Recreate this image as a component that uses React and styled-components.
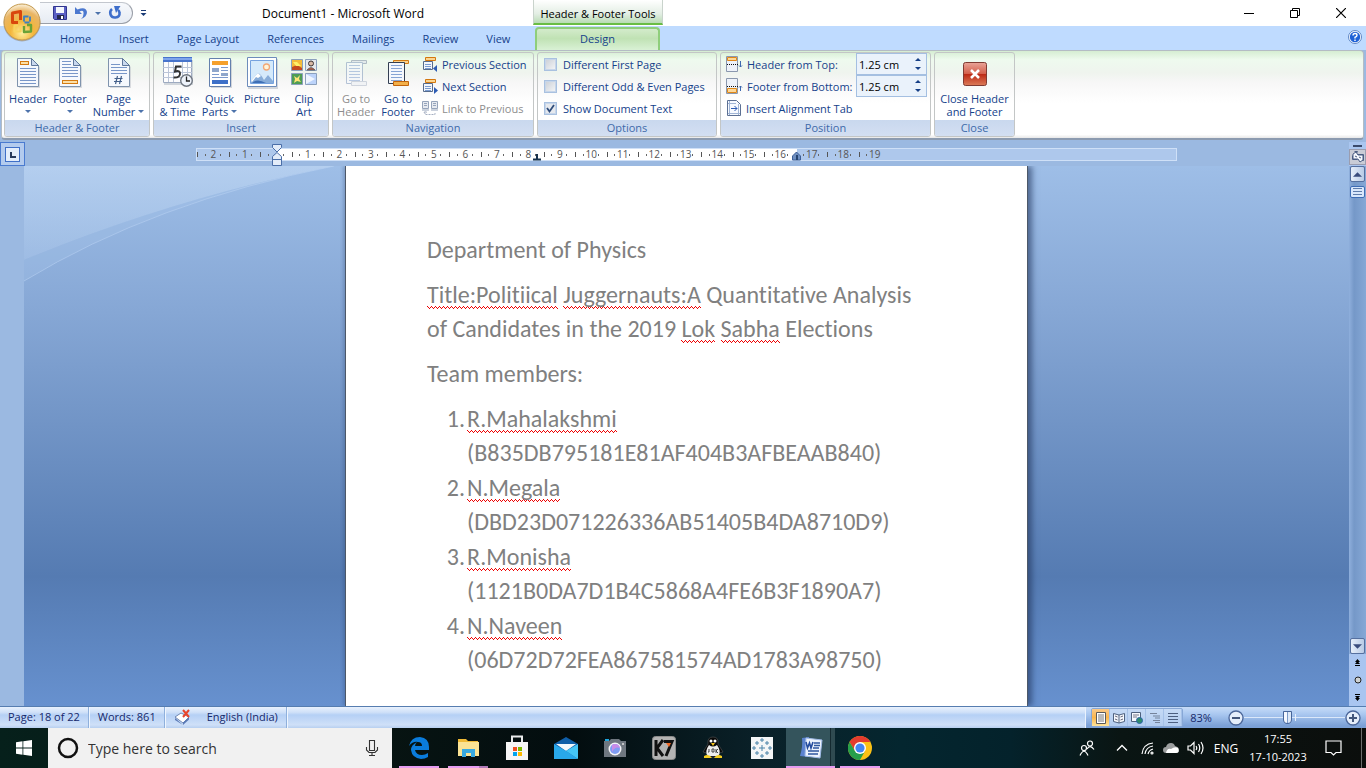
import React from "react";
import styled, { createGlobalStyle, css } from "styled-components";

const Global = createGlobalStyle`
  * { box-sizing: border-box; }
  body { margin: 0; background: #9bb9e1; font-family: "Open Sans", "Noto Sans", sans-serif; font-size: 11px; color: #15428b; }
  button, input { font: inherit; color: inherit; margin: 0; }
  button { padding: 0; border: 0; background: none; cursor: pointer; }
  svg { display: block; flex: none; }
`;

const Shell = styled.div`
  display: flex;
  flex-direction: column;
  height: 100vh;
  min-width: 1100px;
  position: relative;
  overflow: hidden;
`;

/* ---------- title bar ---------- */
const TitleBar = styled.header`
  display: flex;
  height: 26px;
  flex: none;
  background: #fff;
  color: #000;
`;
const OfficeButton = styled.button`
  position: absolute;
  left: 2px;
  top: 2px;
  z-index: 3;
`;
const TitleLeft = styled.div`
  display: flex;
  align-items: center;
  width: 533px;
  flex: none;
  padding-left: 40px;
`;
const QuickAccess = styled.div`
  display: flex;
  align-items: center;
  gap: 7px;
  width: 93px;
  height: 22px;
  padding-left: 13px;
  border: 1px solid #9a9fa8;
  border-top-color: #c3c7ce;
  border-left: 0;
  border-radius: 0 11px 11px 0;
  background: linear-gradient(#f7f9fc, #e6ebf3);
`;
const MoreButton = styled.button`
  margin-left: 7px;
`;
const DocTitle = styled.h1`
  flex: 1;
  margin: 0 0 0 6px;
  text-align: center;
  font-size: 12px;
  font-weight: 400;
`;
const ToolsCaption = styled.div`
  display: flex;
  align-items: center;
  justify-content: center;
  width: 130px;
  height: 25px;
  padding-top: 3px;
  border: solid #c9d3cc;
  border-width: 0 1px;
  border-bottom: 2px solid #69bd45;
  background: linear-gradient(#fff, #e3eee4 60%, #b9dcb4);
  white-space: nowrap;
`;
const WindowButtons = styled.div`
  display: flex;
  margin: 0 2px 0 auto;
`;
const WindowButton = styled.button`
  display: grid;
  place-items: center;
  width: 46px;
  height: 25px;
`;

/* ---------- tabs ---------- */
const TabBar = styled.nav`
  display: flex;
  height: 24px;
  flex: none;
  background: #bfdbff;
`;
const TabList = styled.div`
  display: flex;
  width: 535px;
  flex: none;
  padding-left: 46px;
`;
const Tab = styled.button`
  padding: 0 14px 0 14px;
  white-space: nowrap;
  ${(p) =>
    p.$active &&
    css`
      width: 125px;
      height: 23px;
      margin-top: 1px;
      padding-bottom: 3px;
      border: 2px solid #8fce7b;
      border-bottom: 0;
      border-radius: 4px 4px 0 0;
      background: linear-gradient(#d3ebcb, #c0e2b4 45%, #d9f1d5);
    `}
`;
const HelpButton = styled.button`
  margin: 0 4px 2px auto;
`;

/* ---------- ribbon ---------- */
const Ribbon = styled.section`
  display: flex;
  gap: 3px;
  flex: none;
  height: 90px;
  margin: 0 2px 2px 1px;
  padding: 1px 2px;
  border: 1px solid #b4bcc4;
  border-bottom: 2px solid #8c9bb0;
  border-radius: 4px;
  background: linear-gradient(#d5edd2, #eefaee 10%, #eff4ee 25%, #f7f7f7 36%, #fff 60%, #fff 96%, #e8e8e8);
`;
const GroupBox = styled.div`
  display: flex;
  flex-direction: column;
  width: ${(p) => p.$width}px;
  flex: none;
  border: 1px solid #c3c6c6;
  border-radius: 3px;
  overflow: hidden;
`;
const GroupBody = styled.div`
  display: flex;
  flex: 1;
  padding: ${(p) => p.$pad || "0 2px"};
`;
const GroupCaption = styled.div`
  height: 16px;
  line-height: 16px;
  text-align: center;
  color: #3e6aaa;
  background: linear-gradient(#c9d8ee, #d3dff2);
`;
const BigButton = styled.button`
  display: flex;
  flex-direction: column;
  align-items: center;
  width: ${(p) => p.$width || 42}px;
  padding-top: 4px;
  line-height: 13px;
  white-space: nowrap;
  color: ${(p) => (p.disabled ? "#8d8d8d" : "#15428b")};
  svg.icon { margin-bottom: 3px; }
`;
const LabelLine = styled.span`
  display: flex;
  align-items: center;
  justify-content: center;
  gap: 3px;
  min-height: 13px;
`;
const Rows = styled.div`
  display: flex;
  flex-direction: column;
  padding-left: ${(p) => p.$indent || 0}px;
`;
const Row = styled.div`
  display: flex;
  align-items: center;
  gap: 4px;
  height: 22px;
  white-space: nowrap;
`;
const SmallButton = styled(Row).attrs({ as: "button" })`
  color: ${(p) => (p.disabled ? "#8d8d8d" : "#15428b")};
`;
const Check = styled.label`
  display: flex;
  align-items: center;
  gap: 6px;
  height: 22px;
  white-space: nowrap;
  input {
    appearance: none;
    width: 13px;
    height: 13px;
    border: 1px solid #a9c1e0;
    outline: 1px solid #c7d6ea;
    outline-offset: -2px;
    background: linear-gradient(135deg, #c9ced6, #f6f7f8);
  }
  input:checked {
    background: url("data:image/svg+xml,%3Csvg xmlns='http://www.w3.org/2000/svg' viewBox='0 0 11 11'%3E%3Cpath d='M2 5l2.500 3.500L9 2' fill='none' stroke='%232f4d7c' stroke-width='1.800'/%3E%3C/svg%3E") center / 11px 11px no-repeat, #e6e9ee;
  }
`;
const FieldLabel = styled.label`
  width: 105px;
`;
const Spin = styled.div`
  display: flex;
  width: 71px;
  height: 22px;
  border: 1px solid #a4bfe1;
  background: #eaf2fb;
  input {
    width: 50px;
    padding: 0 2px;
    border: 0;
    background: none;
    color: #000;
  }
`;
const SpinButtons = styled.div`
  display: flex;
  flex-direction: column;
  justify-content: center;
  gap: 6px;
  margin-left: 8px;
`;

/* ---------- ruler ---------- */
const RulerRow = styled.div`
  display: flex;
  height: 24px;
  flex: none;
  background: #9bb9e1;
`;
const TabStop = styled.button`
  display: grid;
  place-items: center;
  width: 25px;
  height: 24px;
  margin-right: -1px;
  border: 1px solid #4a7bd0;
  background: #b3cbee;
`;
const RulerTrack = styled.div`
  display: flex;
  flex: 1;
  justify-content: center;
  align-items: center;
`;
const RulerBar = styled.div`
  position: relative;
  width: 981px;
  height: 13px;
  border: 1px solid #cfe0f7;
  background: linear-gradient(90deg, #aec8ec 80px, #fff 80px 600px, #aec8ec 600px);
`;
const Scale = styled.div`
  display: grid;
  grid-template-columns: repeat(22, 1fr);
  width: 693px;
  height: 11px;
`;
const Unit = styled.span`
  padding-left: 1px;
  text-align: center;
  line-height: 10px;
  font-size: 10px;
  color: #555;
  background:
    linear-gradient(#555, #555) 0 3px / 1px 5px no-repeat,
    linear-gradient(#666, #666) 25% 5px / 1px 2px no-repeat,
    linear-gradient(#666, #666) 75% 5px / 1px 2px no-repeat;
  &:last-child {
    background:
      linear-gradient(#555, #555) 0 3px / 1px 5px no-repeat,
      linear-gradient(#666, #666) 25% 5px / 1px 2px no-repeat;
  }
`;
const Marker = styled.svg`
  position: absolute;
  left: ${(p) => p.$left}px;
  top: ${(p) => p.$top}px;
`;
const SideTop = styled.div`
  display: flex;
  flex-direction: column;
  align-items: center;
  gap: 2px;
  width: 17px;
  padding-top: 3px;
  background: #aac6f0;
`;
const SplitHandle = styled.span`
  width: 9px;
  height: 2px;
  background: #3a4a6c;
`;
const RulerToggle = styled.button`
  display: grid;
  place-items: center;
  width: 17px;
  height: 16px;
  border: 1px solid #9a9db0;
  background: #c9ccd6;
`;

/* ---------- workspace ---------- */
const Workspace = styled.main`
  display: flex;
  flex: 1;
  min-height: 0;
`;
const VerticalRuler = styled.div`
  width: 24px;
  flex: none;
  background: #9bb9e1;
`;
const Desk = styled.div`
  position: relative;
  display: flex;
  justify-content: center;
  flex: 1;
  overflow: hidden;
  background: linear-gradient(#9ebee7, #86a7d5 27%, #557bb2 76%, #6791cf);
`;
const Swoosh = styled.svg`
  position: absolute;
  left: 0;
  top: 0;
`;
const Page = styled.article`
  position: relative;
  width: 683px;
  padding: 67px 81px 0;
  border: solid #4d5868;
  border-width: 0 1px;
  background: #fff;
  box-shadow: 4px 0 6px rgba(30, 50, 90, 0.6), -2px 0 3px rgba(30, 50, 90, 0.2);
  color: #808080;
  font-family: Carlito, Lato, sans-serif;
  font-size: 24px;
  font-variant-ligatures: none;
  line-height: 34px;
`;
const Para = styled.p`
  margin: 0 0 11px;
  white-space: nowrap;
`;
const Members = styled.ol`
  display: flex;
  flex-direction: column;
  gap: 1px;
  margin: 0;
  padding: 0;
  list-style: none;
`;
const Member = styled.li`
  display: grid;
  grid-template-columns: 40px 1fr;
`;
const Num = styled.span`
  text-align: right;
  padding-right: 2px;
`;
const Typo = styled.span`
  background:
    repeating-linear-gradient(90deg, #e00 0 1px, transparent 1px 4px) 0 calc(100% - 2px) / 100% 1px no-repeat,
    repeating-linear-gradient(90deg, transparent 0 1px, #e00 1px 2px) 0 calc(100% - 1px) / 100% 1px no-repeat,
    repeating-linear-gradient(90deg, transparent 0 2px, #e00 2px 3px, transparent 3px 4px) 0 100% / 100% 1px no-repeat;
`;
const Scroll = styled.div`
  display: flex;
  flex-direction: column;
  align-items: center;
  width: 17px;
  background: linear-gradient(90deg, #8fafdc, #7598c8 30%, #86a8d6);
`;
const ScrollButton = styled.button`
  display: grid;
  place-items: center;
  width: 15px;
  height: 16px;
  border: 1px solid #56709f;
  border-radius: 2px;
  background: linear-gradient(90deg, #e6eef9, #b9cbe6);
`;
const ScrollThumb = styled.div`
  display: grid;
  place-items: center;
  width: 15px;
  height: 12px;
  margin: 4px 0 auto;
  border: 1px solid #3e6db5;
  border-radius: 2px;
  background: #d9e7fb;
`;
const BrowseButtons = styled.div`
  display: flex;
  flex-direction: column;
  align-items: center;
  justify-content: space-around;
  width: 17px;
  height: 52px;
  background: #a9c5f0;
`;

/* ---------- status bar ---------- */
const StatusBar = styled.footer`
  display: flex;
  height: 22px;
  flex: none;
  border-top: 1px solid #567db0;
  background: linear-gradient(#e8f1fd, #d0e1f8 25%, #b5d0f5 38%, #cfe0f8 85%, #b7cff0);
  color: #15286b;
`;
const StatusItem = styled.button`
  display: flex;
  align-items: center;
  gap: 16px;
  padding: 0 8px 2px 9px;
  border-right: 1px solid #8fb0dc;
  box-shadow: 1px 0 #eff6ff;
  white-space: nowrap;
  &:first-child { padding-left: 8px; }
`;
const StatusRight = styled.div`
  display: flex;
  align-items: center;
  margin-left: auto;
  width: 281px;
  padding: 0 5px;
  border-left: 1px solid #eaf2fd;
  background: linear-gradient(#c7dcf8, #a9c7f0 35%, #7ba0d6 90%);
`;
const ViewButtons = styled.div`
  display: flex;
  border: 1px solid #87a7d6;
  border-radius: 2px;
`;
const ViewButton = styled.button`
  display: grid;
  place-items: center;
  width: 18px;
  height: 17px;
  border-right: 1px solid #a5c1e8;
  background: ${(p) => (p.$active ? "linear-gradient(#f8c98b, #fbb64c 50%, #fde49b)" : "linear-gradient(#c5daf6, #b3ccef)")};
`;
const Percent = styled.button`
  width: 36px;
  margin-right: auto;
  text-align: center;
`;
const ZoomButton = styled.button`
  display: grid;
  place-items: center;
`;
const ZoomRange = styled.input`
  appearance: none;
  width: 101px;
  height: 15px;
  background:
    linear-gradient(#e6effb, #e6effb) 51% 50% / 1px 7px no-repeat,
    linear-gradient(#dbe8fa, #dbe8fa) 0 50% / 100% 1px no-repeat;
  &::-webkit-slider-thumb {
    appearance: none;
    width: 9px;
    height: 13px;
    border: 1px solid #46659a;
    border-radius: 1px 1px 5px 5px;
    background: linear-gradient(90deg, #f4f8ff 3px, #7d9bc9 3px 4px, #dce8f8 4px);
  }
`;

/* ---------- taskbar ---------- */
const Taskbar = styled.footer`
  display: flex;
  height: 40px;
  flex: none;
  background: linear-gradient(90deg, #06201b, #071412 28%, #030d0f 42%, #0a2129 56%, #04262f 66%, #04222b 74%, #0a1513 82%, #0b0e0c);
  color: #fff;
`;
const StartButton = styled.button`
  display: grid;
  place-items: center;
  width: 48px;
`;
const SearchBox = styled.label`
  display: flex;
  align-items: center;
  gap: 9px;
  width: 344px;
  padding: 0 12px 0 9px;
  background: #f1f1f1;
  input {
    flex: 1;
    min-width: 0;
    padding: 0;
    border: 0;
    background: none;
    font-size: 14px;
  }
  input::placeholder { color: #333; opacity: 1; }
`;
const TaskList = styled.div`
  display: flex;
  padding-left: 2px;
`;
const Task = styled.button`
  display: grid;
  place-items: center;
  width: 49px;
  height: 40px;
  background: ${(p) => (p.$active ? "linear-gradient(90deg, #34545c 44px, #14292f 44px 45px, #2f4a50 45px)" : "none")};
  &::after {
    content: "";
    grid-area: 1 / 1;
    align-self: end;
    width: ${(p) => (p.$active ? 49 : 40)}px;
    height: ${(p) => (p.$running ? 2 : 0)}px;
    background: ${(p) => (p.$multi ? "linear-gradient(90deg, #e59cf0 31px, #b07bb9 31px)" : "#e59cf0")};
  }
  svg { grid-area: 1 / 1; }
`;
const Tray = styled.div`
  display: flex;
  align-items: center;
  margin-left: auto;
`;
const TrayButton = styled.button`
  display: grid;
  place-items: center;
  width: ${(p) => p.$width || 24}px;
  height: 40px;
  color: #fff;
  font-size: 12px;
`;
const Clock = styled.button`
  width: 66px;
  line-height: 18px;
  color: #fff;
`;
const ShowDesktop = styled.button`
  width: 5px;
  height: 40px;
  margin-left: 6px;
  border-left: 1px solid #6a6d6c;
`;

/* ---------- icons ---------- */
const Arrow = ({ up, w = 6, fill = "#4d73ab" }) => (
  <svg width={w} height={Math.ceil(w / 2)} viewBox="0 0 6 3"><path d={up ? "M0 3L3 0L6 3Z" : "M0 0H6L3 3Z"} fill={fill} /></svg>
);
const Orange = ({ x, y, w = 12, h = 4 }) => (
  <rect x={x} y={y} width={w} height={h} fill="#fce0a8" stroke="#d47b13" />
);
const Sheet = ({ kind }) => (
  <svg className="icon" width="32" height="32" viewBox="0 0 32 32">
    <path d="M7 3H20L28 10V31H7Z" fill="#b9bec6" opacity=".5" />
    <path d="M5.500 1.500H19.500L26.500 8.500V29.500H5.500Z" fill="#f5f8fd" stroke="#7f93ad" />
    <path d="M19.500 1.500V8.500H26.500Z" fill="#c9d8ee" stroke="#5f779a" />
    <path d={kind === "header" ? "M8 11.500H24M8 14.500H24M8 17.500H24M8 20.500H24M8 23.500H24M8 26.500H24" : kind === "footer" ? "M8 4.500H17M8 7.500H17M8 10.500H24M8 13.500H24M8 16.500H24M8 19.500H24" : "M8 7.500H17M8 10.500H24M8 13.500H24M8 16.500H24"} stroke="#7896c8" />
    {kind === "header" && <Orange x={8.5} y={4.5} w={8} h={3} />}
    {kind === "footer" && <Orange x={8.5} y={23.5} w={15} h={3} />}
    {kind === "number" && <path d="M14.500 19L12.500 27M18.500 19L16.500 27M11.500 21.500H19.500M11 24.500H19" stroke="#45618c" strokeWidth="1.200" />}
  </svg>
);
const DateIcon = () => (
  <svg className="icon" width="32" height="32" viewBox="0 0 32 32">
    <path d="M2 3H31V28H2Z" fill="#b8bfc9" opacity=".6" />
    <path d="M1.500 1.500H29.500V25.500H1.500Z" fill="#fdfdfe" stroke="#9daac0" />
    <path d="M1 10.500H30M1 15.500H30M1 20.500H30M6.500 5V25M11.500 5V25M20.500 5V25M25.500 5V25" stroke="#bbc5d8" />
    <path d="M1 0H30V5H1Z" fill="#4774cc" /><path d="M1 1H30V3H1Z" fill="#7fa5ec" />
    <path d="M19.500 9.500H14L13 14.500Q18.500 13 18 17Q17.500 21 11.500 20.500" fill="none" stroke="#333" strokeWidth="2" />
    <circle cx="24.500" cy="23.500" r="5.800" fill="#eef3fb" stroke="#6f7680" strokeWidth="1.400" />
    <path d="M24.500 19.500V24H28" fill="none" stroke="#222" strokeWidth="1.300" />
  </svg>
);
const QuickIcon = () => (
  <svg className="icon" width="32" height="32" viewBox="0 0 32 32">
    <path d="M7 3H28V31H7Z" fill="#b9bec6" opacity=".6" />
    <path d="M5.500 1.500H26.500V29.500H5.500Z" fill="#fff" stroke="#6480ad" />
    <path d="M8 4H24V8H8Z" fill="#f5a02c" />
    <path d="M8 11H15V15H8ZM17 16H24V19H17Z" fill="#8fa6cb" />
    <path d="M17 10.500H24M17 13.500H24M8 17.500H15M8 20.500H24" stroke="#7e9bce" />
    <path d="M8 23H24V27H8Z" fill="#3e70c8" />
  </svg>
);
const PictureIcon = () => (
  <svg className="icon" width="32" height="32" viewBox="0 0 32 32">
    <path d="M2 2H32V32H2Z" fill="#b9bec6" opacity=".6" />
    <path d="M1.500.5H30.500V29.500H1.500Z" fill="#fff" stroke="#6d8cbb" />
    <path d="M4.500 3.500H27.500V26.500H4.500Z" fill="#d5eafb" stroke="#76a3df" />
    <circle cx="20.500" cy="10" r="3" fill="#fff4d8" stroke="#f2a777" strokeWidth="1.300" />
    <path d="M5 24L12 16Q15 17 18 23L22 18L27 24V26H5Z" fill="#88add9" /><path d="M5 24L12 16L15 19L12 21L10 20L6 25Z" fill="#fff" /><path d="M6 26Q11 21 20 26Z" fill="#3f6fb5" />
  </svg>
);
const ClipIcon = () => (
  <svg className="icon" width="32" height="32" viewBox="0 0 32 32">
    <g stroke="#8ba0bd"><path d="M3.500 2.500H14.500V13.500H3.500Z" fill="#f3bb3a" /><path d="M17.500 2.500H28.500V13.500H17.500Z" fill="#e6e8ec" /><path d="M3.500 16.500H14.500V27.500H3.500Z" fill="#4e9d55" /><path d="M17.500 16.500H28.500V27.500H17.500Z" fill="#bcd3fa" /></g>
    <path d="M4 10L9 8L14 11V13H4Z" fill="#c34a20" /><path d="M5 5H9L13 9H8Z" fill="#fff16a" />
    <circle cx="23" cy="6.500" r="2.500" fill="#d8b9a4" stroke="#3d3434" /><path d="M19 13Q23 8 27 13Z" fill="#b5614a" stroke="#444" strokeWidth=".6" />
    <path d="M6 19L9 21L12 18L11 22L13 25L9 24L6 26L7 22Z" fill="#ffe678" />
    <path d="M18 17L27 22L18 27Z" fill="#eff5ff" />
  </svg>
);
const GotoIcon = ({ top, faded }) => (
  <svg className="icon" width="32" height="32" viewBox="0 0 32 32" opacity={faded ? 0.55 : 1}>
    <path d="M11.500 3.500H26.500V6.500H11.500Z" fill={top ? "#d9dfe9" : "#fad28e"} stroke={top ? "#7d8ba3" : "#d17b15"} />
    <path d="M6.500 5.500H22.500V26.500H6.500Z" fill="#f5f8fd" stroke={faded ? "#7f97bb" : "#333f52"} />
    <path d="M9 8.500H20M9 11.500H20M9 14.500H20M9 17.500H20M9 20.500H20M9 23.500H20" stroke="#86a4d4" />
    <path d="M11.500 24.500H26.500V28.500H11.500Z" fill={top ? "#eceff4" : "#f3b04a"} stroke={top ? "#aeb8c8" : "#c2640c"} />
  </svg>
);
const SectionIcon = ({ next }) => (
  <svg width="16" height="16" viewBox="0 0 16 16">
    <path d="M1.500 5.500H10.500V13.500H1.500Z" fill="#f2f6fc" stroke="#566b8c" /><path d="M3 8.500H9M3 10.500H9M3 12.500H9" stroke="#7a9bd0" />
    <path d="M3.500 1.500H13.500V4.500H3.500Z" fill="#fbd591" stroke="#d3780f" />
    <path d={next ? "M12 9L16 12.500L12 16Z" : "M15 9L11 12.500L15 16Z"} fill="#2d5cb4" />
  </svg>
);
const LinkIcon = () => (
  <svg width="16" height="16" viewBox="0 0 16 16" opacity=".75">
    <path d="M.5 1.500H6.500V8.500H.5ZM9.500 1.500H15.500V8.500H9.500Z" fill="#dfe4ec" stroke="#7486a5" /><path d="M2 3.500H5M2 5.500H5M11 3.500H14M11 5.500H14M0 10H7M9 10H16" stroke="#7486a5" />
    <path d="M3 12V14.500H13V12M5 12.500L3 11L2 13" fill="none" stroke="#8794ad" strokeDasharray="2 1" />
  </svg>
);
const OffsetIcon = ({ bottom }) => (
  <svg width="17" height="16" viewBox="0 0 17 16">
    <path d="M.5.500H11.500V15.500H.5Z" fill="#eef2f9" stroke="#8a98ae" />
    <path d={bottom ? "M1.500 10.500H10.500V14.500H1.500Z" : "M1.500 1.500H10.500V4.500H1.500Z"} fill="#fcd89a" stroke="#e08818" />
    <path d="M1 8.500H13" stroke="#111" strokeDasharray="1 1" />
    <path d={bottom ? "M14.500 13V8M13 9.500L14.500 8L16 9.500" : "M14.500 5V11M13 9.500L14.500 11L16 9.500"} fill="none" stroke="#3c68af" />
  </svg>
);
const AlignTabIcon = () => (
  <svg width="16" height="16" viewBox="0 0 16 16">
    <path d="M1.500.500H10.500L14.500 4.500V15.500H1.500Z" fill="#f7faff" stroke="#5c7093" /><path d="M3.500 1V15M12.500 4V15M2 13.500H14M2 3.500H10" stroke="#a1b5d5" />
    <path d="M5 8.500H11M8.500 6L11 8.500L8.500 11" fill="none" stroke="#2d5cb4" />
  </svg>
);
const CloseIcon = () => (
  <svg className="icon" width="32" height="32" viewBox="0 0 32 32">
    <defs><linearGradient id="close" x2="0" y2="1"><stop stopColor="#e9a498" /><stop offset=".48" stopColor="#d4604c" /><stop offset=".52" stopColor="#bd2a16" /><stop offset="1" stopColor="#dc7c59" /></linearGradient></defs>
    <rect x="4.500" y="5.500" width="23" height="23" rx="2" fill="url(#close)" stroke="#803b33" />
    <path d="M12 13L20 21M20 13L12 21" stroke="#fff" strokeWidth="2.500" />
  </svg>
);
const OfficeLogo = () => (
  <svg width="40" height="41" viewBox="0 0 40 41">
    <defs><radialGradient id="orb" cx=".5" cy=".8" r=".8"><stop stopColor="#fff0a0" /><stop offset=".4" stopColor="#f3b63c" /><stop offset=".75" stopColor="#e9b565" /><stop offset="1" stopColor="#fbf3df" /></radialGradient></defs>
    <circle cx="20" cy="21" r="18.500" fill="#8d8b85" opacity=".6" />
    <circle cx="20" cy="20" r="18" fill="url(#orb)" stroke="#c59a4e" />
    <g fill="none" strokeLinejoin="round">
      <path d="M16 20.500H10.500V11L18.500 9.500V18" stroke="#d9460d" strokeWidth="3" />
      <path d="M22 15V14.500H28V20.500H22Z" stroke="#3b7fc4" strokeWidth="1.800" strokeDasharray="5 1.500" />
      <path d="M16 23.500H12.500V29.500H18.500V25" stroke="#f8d45e" strokeWidth="2.200" />
      <path d="M22 24V30L29 29.500V23H25" stroke="#6ba237" strokeWidth="2.400" />
    </g>
  </svg>
);
const Lines = () => (
  <svg width="12" height="12" viewBox="0 0 12 12"><path d="M1 1.500H11M1 4.500H11M1 7.500H11M1 10.500H11" stroke="#4c5f80" /></svg>
);

const docMembers = [
  ["R.Mahalakshmi", "(B835DB795181E81AF404B3AFBEAAB840)"],
  ["N.Megala", "(DBD23D071226336AB51405B4DA8710D9)"],
  ["R.Monisha", "(1121B0DA7D1B4C5868A4FE6B3F1890A7)"],
  ["N.Naveen", "(06D72D72FEA867581574AD1783A98750)"],
];
const units = Array.from({ length: 22 }, (_, i) => (i === 2 ? "" : Math.abs(i - 2)));

function Big({ icon, lines, width, arrow, disabled }) {
  return (
    <BigButton $width={width} disabled={disabled}>
      {icon}
      {lines.map((l, i) => (
        <LabelLine key={i}>{l}{arrow && i === lines.length - 1 && <Arrow />}</LabelLine>
      ))}
    </BigButton>
  );
}
function Group({ title, width, pad, children }) {
  return (
    <GroupBox $width={width}>
      <GroupBody $pad={pad}>{children}</GroupBody>
      <GroupCaption>{title}</GroupCaption>
    </GroupBox>
  );
}
function Spinner({ id }) {
  return (
    <Spin>
      <input id={id} defaultValue="1.25 cm" />
      <SpinButtons>
        <button aria-label="Increase"><Arrow up fill="#163f86" /></button>
        <button aria-label="Decrease"><Arrow fill="#163f86" /></button>
      </SpinButtons>
    </Spin>
  );
}

export default function App() {
  return (
    <Shell>
      <Global />
      <OfficeButton aria-label="Office"><OfficeLogo /></OfficeButton>
      <TitleBar>
        <TitleLeft>
          <QuickAccess>
            <button aria-label="Save">
              <svg width="14" height="14" viewBox="0 0 14 14"><path d="M.5.500H13.500V13.500H1.500L.5 12.500Z" fill="#5a5fc4" stroke="#30358f" /><path d="M3 1H11V7H3Z" fill="#f2f5fd" /><path d="M4 9H11V13H4Z" fill="#24284d" /><path d="M8 10H10V13H8Z" fill="#fff" /></svg>
            </button>
            <button aria-label="Undo">
              <svg width="14" height="14" viewBox="0 0 14 14"><path d="M1 1V8H8L5.500 5.500Q10 3 9.500 8Q9.500 11 7 13Q13 11 13 6Q12 0 3.500 3.500Z" fill="#4b78cf" /></svg>
            </button>
            <button aria-label="Undo list"><Arrow /></button>
            <button aria-label="Repeat">
              <svg width="14" height="14" viewBox="0 0 14 14"><path d="M4 3Q1.500 5 2.500 8.500Q4 12 7.500 11.500Q12 11 11.500 7Q11.500 5 10 4" fill="none" stroke="#3f6fcb" strokeWidth="2.600" /><path d="M6 0H12.500L8 7Z" fill="#3f6fcb" /></svg>
            </button>
          </QuickAccess>
          <MoreButton aria-label="Customize">
            <svg width="7" height="7" viewBox="0 0 7 7"><path d="M1 .5H6" stroke="#1b3b76" /><path d="M.5 3H6.500L3.500 6Z" fill="#1b3b76" /></svg>
          </MoreButton>
          <DocTitle>Document1 - Microsoft Word</DocTitle>
        </TitleLeft>
        <ToolsCaption>Header &amp; Footer Tools</ToolsCaption>
        <WindowButtons>
          <WindowButton aria-label="Minimize"><svg width="10" height="10"><path d="M0 5.500H10" stroke="#000" /></svg></WindowButton>
          <WindowButton aria-label="Restore"><svg width="10" height="10"><path d="M.5 2.500H7.500V9.500H.5ZM2.500 2V.5H9.500V7.500H8" fill="none" stroke="#000" /></svg></WindowButton>
          <WindowButton aria-label="Close"><svg width="10" height="10"><path d="M0 0L10 10M10 0L0 10" stroke="#000" strokeWidth="1.200" /></svg></WindowButton>
        </WindowButtons>
      </TitleBar>

      <TabBar>
        <TabList>
          {["Home", "Insert", "Page Layout", "References", "Mailings", "Review", "View"].map((t) => <Tab key={t}>{t}</Tab>)}
        </TabList>
        <Tab $active>Design</Tab>
        <HelpButton aria-label="Help">
          <svg width="14" height="14" viewBox="0 0 14 14"><circle cx="7" cy="7" r="6.500" fill="#fff" stroke="#5e86c4" /><circle cx="7" cy="7" r="5.200" fill="#1f62d6" /><path d="M5 5.500Q5 3.500 7 3.500Q9 3.500 9 5.200Q9 6.300 7 7.300V8.500M7 9.500V11" fill="none" stroke="#fff" strokeWidth="1.400" /></svg>
        </HelpButton>
      </TabBar>

      <Ribbon>
        <Group title="Header & Footer" width={146}>
          <Big icon={<Sheet kind="header" />} lines={["Header", ""]} arrow />
          <Big icon={<Sheet kind="footer" />} lines={["Footer", ""]} arrow />
          <Big icon={<Sheet kind="number" />} lines={["Page", "Number"]} width={55} arrow />
        </Group>
        <Group title="Insert" width={176}>
          <Big icon={<DateIcon />} lines={["Date", "& Time"]} width={43} />
          <Big icon={<QuickIcon />} lines={["Quick", "Parts"]} width={41} arrow />
          <Big icon={<PictureIcon />} lines={["Picture"]} width={44} />
          <Big icon={<ClipIcon />} lines={["Clip", "Art"]} width={40} />
        </Group>
        <Group title="Navigation" width={202}>
          <Big icon={<GotoIcon top faded />} lines={["Go to", "Header"]} disabled />
          <Big icon={<GotoIcon />} lines={["Go to", "Footer"]} />
          <Rows $indent={3}>
            <SmallButton><SectionIcon />Previous Section</SmallButton>
            <SmallButton><SectionIcon next />Next Section</SmallButton>
            <SmallButton disabled><LinkIcon />Link to Previous</SmallButton>
          </Rows>
        </Group>
        <Group title="Options" width={180} pad="0 6px">
          <Rows>
            <Check><input type="checkbox" />Different First Page</Check>
            <Check><input type="checkbox" />Different Odd &amp; Even Pages</Check>
            <Check><input type="checkbox" defaultChecked />Show Document Text</Check>
          </Rows>
        </Group>
        <Group title="Position" width={211} pad="0 5px">
          <Rows>
            <Row><OffsetIcon /><FieldLabel htmlFor="top">Header from Top:</FieldLabel><Spinner id="top" /></Row>
            <Row><OffsetIcon bottom /><FieldLabel htmlFor="bottom">Footer from Bottom:</FieldLabel><Spinner id="bottom" /></Row>
            <SmallButton><AlignTabIcon />Insert Alignment Tab</SmallButton>
          </Rows>
        </Group>
        <Group title="Close" width={81}>
          <Big icon={<CloseIcon />} lines={["Close Header", "and Footer"]} width={75} />
        </Group>
      </Ribbon>

      <RulerRow>
        <TabStop aria-label="Tab stop">
          <svg width="15" height="15" viewBox="0 0 15 15"><rect x=".5" y=".5" width="14" height="14" fill="#e3edfb" stroke="#3f6fc7" /><path d="M6 5V10H11" fill="none" stroke="#26395c" strokeWidth="2" /></svg>
        </TabStop>
        <RulerTrack>
          <RulerBar>
            <Scale>{units.map((u, i) => <Unit key={i}>{u}</Unit>)}</Scale>
            <Marker $left={75} $top={-5} width="10" height="22" viewBox="0 0 10 22">
              <path d="M.5.500H9.500V3.500L5 8L.5 3.500ZM5 8.500L9.500 12.500V21.500H.5V12.500ZM.5 15.500H9.500" fill="#e3ecf9" stroke="#4a6ea8" />
            </Marker>
            <Marker $left={336} $top={4} width="8" height="8"><path d="M4 1V6M0 6.500H8" stroke="#16324e" strokeWidth="2" /></Marker>
            <Marker $left={595} $top={2} width="9" height="10"><path d="M.5 9V5L4.500 1L8.500 5V9Z" fill="#6f8fc0" stroke="#3c5f98" /><path d="M4 4H6V9H4Z" fill="#27446f" /></Marker>
          </RulerBar>
        </RulerTrack>
        <SideTop>
          <SplitHandle />
          <RulerToggle aria-label="View ruler">
            <svg width="12" height="12" viewBox="0 0 12 12"><path d="M.5 4.500V8.500H5.500M4.500 3.500H11.500V9.500H9.500M2.500.500H5.500L4 3L6.500 6" fill="none" stroke="#4a5d82" /><path d="M1 3L4 1L6 4H11V9L8 11L6 8H1Z" fill="#f5f8fd" stroke="#4a5d82" /><path d="M3 5L5 6M7 6L9 7" stroke="#4a5d82" /></svg>
          </RulerToggle>
        </SideTop>
      </RulerRow>

      <Workspace>
        <VerticalRuler />
        <Desk>
          <Swoosh width="322" height="120" viewBox="0 0 322 120">
            <defs><linearGradient id="sw" x2="0" y2="1"><stop stopColor="#c6dcf5" stopOpacity=".55" /><stop offset="1" stopColor="#b5cff0" stopOpacity=".4" /></linearGradient></defs>
            <path d="M0 0H310Q150 32 0 94Z" fill="url(#sw)" />
            <path d="M0 94Q150 32 310 0Q130 36 0 115Z" fill="#a9c6ea" opacity=".3" />
            <path d="M0 115Q130 36 310 0" fill="none" stroke="#b7d1f2" opacity=".6" />
          </Swoosh>
          <Page>
            <Para>Department of Physics</Para>
            <Para>
              <Typo>Title:Politiical</Typo> <Typo>Juggernauts:A</Typo> Quantitative Analysis<br />
              of Candidates in the 2019 <Typo>Lok</Typo> <Typo>Sabha</Typo> Elections
            </Para>
            <Para>Team members:</Para>
            <Members>
              {docMembers.map(([name, id], i) => (
                <Member key={id}>
                  <Num>{i + 1}.</Num>
                  <span><Typo>{name}</Typo><br />{id}</span>
                </Member>
              ))}
            </Members>
          </Page>
        </Desk>
        <Scroll>
          <ScrollButton aria-label="Scroll up"><Arrow up w={9} fill="#3a4c7c" /></ScrollButton>
          <ScrollThumb><svg width="9" height="8"><path d="M0 .5H9M0 3.500H9M0 6.500H9" stroke="#5f7cab" /></svg></ScrollThumb>
          <ScrollButton aria-label="Scroll down"><Arrow w={9} fill="#3a4c7c" /></ScrollButton>
          <BrowseButtons>
            <button aria-label="Previous page"><svg width="7" height="7"><path d="M3.500 0L6 3H1ZM3.500 2L6 5H1ZM1 6H6V7H1Z" /></svg></button>
            <button aria-label="Browse object"><svg width="8" height="8"><circle cx="4" cy="4" r="3" fill="#cfd2d2" stroke="#222" /></svg></button>
            <button aria-label="Next page"><svg width="7" height="7"><path d="M1 0H6V1H1ZM1 2H6L3.500 5ZM1 4H6L3.500 7Z" /></svg></button>
          </BrowseButtons>
        </Scroll>
      </Workspace>

      <StatusBar>
        <StatusItem>Page: 18 of 22</StatusItem>
        <StatusItem>Words: 861</StatusItem>
        <StatusItem>
          <svg width="17" height="16" viewBox="0 0 17 16"><path d="M1 8L7 4L15 8L9 14Z" fill="#fff" stroke="#6f87b3" /><path d="M1 9V11L9 16V13.500L15 8.500V10.500L9 16" fill="#5a79b5" /><path d="M9 1L15 8M15 1L9 8" stroke="#e8452c" strokeWidth="2" /></svg>
          English (India)
        </StatusItem>
        <StatusRight>
          <ViewButtons>
            <ViewButton $active aria-label="Print layout"><svg width="12" height="12"><path d="M1.500.500H10.500V11.500H1.500Z" fill="#fff" stroke="#5a5a5a" /><path d="M3 3H9M3 5H9M3 7H9M3 9H9" stroke="#777" /></svg></ViewButton>
            <ViewButton aria-label="Reading"><svg width="12" height="12"><path d="M.5 1.500L6 3L11.500 1.500V9.500L6 11L.5 9.500ZM6 3V11" fill="#f6f9fe" stroke="#4e617f" /><path d="M2 4L4.500 5M2 7L4.500 8M7.500 5L10 4M7.500 8L10 7" stroke="#667" /></svg></ViewButton>
            <ViewButton aria-label="Web layout"><svg width="13" height="12"><path d="M1.500.500H10.500V9.500H1.500Z" fill="#f6f9fe" stroke="#4e617f" /><path d="M3 3H9M3 5H7" stroke="#778" /><circle cx="9.500" cy="8.500" r="3" fill="#2e8c6a" stroke="#2b62a8" /></svg></ViewButton>
            <ViewButton aria-label="Outline"><svg width="12" height="12"><path d="M1 1.500H8M4 4H11M6 6H11M4 8.500H11M6 10.500H11" stroke="#75839b" /></svg></ViewButton>
            <ViewButton aria-label="Draft"><Lines /></ViewButton>
          </ViewButtons>
          <Percent>83%</Percent>
          <ZoomButton aria-label="Zoom out"><svg width="16" height="16"><circle cx="8" cy="8" r="7" fill="#e5eefb" stroke="#4b6699" strokeWidth="1.300" /><path d="M4 8H12" stroke="#43567b" strokeWidth="2" /></svg></ZoomButton>
          <ZoomRange type="range" min="10" max="190" defaultValue="86" aria-label="Zoom" />
          <ZoomButton aria-label="Zoom in"><svg width="16" height="16"><circle cx="8" cy="8" r="7" fill="#e5eefb" stroke="#4b6699" strokeWidth="1.300" /><path d="M4 8H12M8 4V12" stroke="#43567b" strokeWidth="2" /></svg></ZoomButton>
        </StatusRight>
      </StatusBar>

      <Taskbar>
        <StartButton aria-label="Start"><svg width="16" height="16" viewBox="0 0 16 16"><path d="M0 2.200L6.500 1.300V7.500H0ZM7.300 1.200L16 0V7.500H7.300ZM0 8.400H6.500V14.700L0 13.800ZM7.300 8.400H16V16L7.300 14.800Z" fill="#fff" /></svg></StartButton>
        <SearchBox>
          <svg width="22" height="22"><circle cx="11" cy="11" r="9" fill="none" stroke="#111" strokeWidth="2.500" /></svg>
          <input aria-label="Search" placeholder="Type here to search" />
          <svg width="16" height="18" viewBox="0 0 16 18"><path d="M5.500 1.500H10.500V11.500H5.500ZM2.500 8V11L5 13.500H11L13.500 11V8M8 13.500V16.500M5 16.500H11" fill="none" stroke="#333" strokeWidth="1.100" /></svg>
        </SearchBox>
        <TaskList>
          <Task $running aria-label="Edge">
            <svg width="22" height="24" viewBox="0 0 22 24"><path d="M1 10Q3 1 12 1Q21 2 21 11V14H7Q8 19 14 19Q17 19 20 17V21Q17 23 13 23Q4 22 3 14Q3 9 9 6Q7 8 7 10H14Q14 6 10 6Q5 5 1 10Z" fill="#0a7cdc" /></svg>
          </Task>
          <Task $running $multi aria-label="File Explorer">
            <svg width="22" height="20" viewBox="0 0 22 20"><path d="M1 1H9L11 3H21V18H1Z" fill="#f0ba36" /><path d="M1 4H22V18H1Z" fill="#fbe394" /><path d="M5 11H18V19H14V15H9V19H5Z" fill="#38a9e0" /></svg>
          </Task>
          <Task aria-label="Store">
            <svg width="24" height="26" viewBox="0 0 24 26"><path d="M7 8V1.500H17V8" fill="none" stroke="#e9ecec" strokeWidth="2" /><path d="M1 7H23V25H1Z" fill="#f6f6f6" /><path d="M8 12H12V16H8Z" fill="#f25022" /><path d="M13 12H17V16H13Z" fill="#7fba00" /><path d="M8 17H12V21H8Z" fill="#00a4ef" /><path d="M13 17H17V21H13Z" fill="#ffb900" /></svg>
          </Task>
          <Task aria-label="Mail">
            <svg width="24" height="22" viewBox="0 0 24 22"><path d="M0 7L12 0L24 7V21H0Z" fill="#0f5ea8" /><path d="M2 7H22L12 14Z" fill="#f3f8fc" /><path d="M0 7L12 14L24 22H0Z" fill="#29a8ea" /><path d="M24 7L12 14L24 22Z" fill="#45c5f5" /></svg>
          </Task>
          <Task aria-label="Camera">
            <svg width="24" height="20" viewBox="0 0 24 20"><path d="M1 3H6L8 1H16L18 3H23V19H1Z" fill="#6f7780" /><path d="M2 1H6V3H2Z" fill="#1da6e0" /><circle cx="12" cy="11" r="6.500" fill="#f4f4f8" /><circle cx="12" cy="11" r="5" fill="#7e9cf2" /><path d="M9 7A5 5 0 0 1 17 10Q12 8 9 14Z" fill="#c78be7" /><circle cx="20" cy="6" r="1" fill="#ddd" /></svg>
          </Task>
          <Task aria-label="K7">
            <svg width="24" height="24" viewBox="0 0 24 24"><rect x=".5" y=".5" width="23" height="23" rx="3" fill="#b3b3b3" stroke="#8b8b8b" /><path d="M4 4V20M11 4L5 12L11 20M12 5.500H20L14 20" fill="none" stroke="#111" strokeWidth="3" /><path d="M14 7H19L17 11Z" fill="#f26a26" /></svg>
          </Task>
          <Task aria-label="JDK">
            <svg width="22" height="24" viewBox="0 0 22 24"><path d="M6 8Q5 1 11 1Q17 1 16 8L21 16L17 17V21H5V17L1 16Z" fill="#090909" stroke="#555" strokeWidth=".6" /><path d="M7 9Q11 12 15 9Q20 16 16 20H6Q2 16 7 9Z" fill="#eee" /><circle cx="9" cy="5" r="1.500" fill="#fff" /><circle cx="13" cy="5" r="1.500" fill="#fff" /><path d="M9 7H13L11 10Z" fill="#f8c51a" /><path d="M2 20Q7 17 10 22H2ZM12 22Q15 17 20 20V22Z" fill="#f5cd20" /><path d="M7 13V16H6M10 13V16H12V13ZM14 13V17M16 13L14 15L16 17" fill="none" stroke="#444" /></svg>
          </Task>
          <Task aria-label="Tableau">
            <svg width="22" height="22" viewBox="0 0 22 22"><path d="M0 0H22V22H0Z" fill="#f4f6f7" /><path d="M11 8V14M8 11H14M11 1V5M9 3H13M11 17V21M9 19H13M3 9V13M1 11H5M19 9V13M17 11H21M6 4V8M4 6H8M16 4V8M14 6H18M6 14V18M4 16H8M16 14V18M14 16H18" stroke="#4b83a8" /></svg>
          </Task>
          <Task $active $running aria-label="Word">
            <svg width="24" height="24" viewBox="0 0 24 24"><path d="M3 2L10 1V21L1 20Q4 10 3 2Z" fill="#5b82cf" /><path d="M7 2L23 4L21 22L6 20Z" fill="#edf3fd" stroke="#9fb9e6" /><path d="M15 7H21M15 9.500H21M14 12H20M9 15H20M9 18H19" stroke="#2f579f" strokeWidth="1.500" /><path d="M7 6L8.500 12L10.500 7L12 12L14 6" fill="none" stroke="#244c9e" strokeWidth="1.600" /></svg>
          </Task>
          <Task $running aria-label="Chrome">
            <svg width="24" height="24" viewBox="0 0 24 24"><circle cx="12" cy="12" r="12" fill="#fbc116" /><path d="M12 6H22.400A12 12 0 0 0 1.600 6L7 15Z" fill="#e33b2e" /><path d="M1.600 6A12 12 0 0 0 12 24L17 15H7Z" fill="#269f4b" /><circle cx="12" cy="12" r="6" fill="#fff" /><circle cx="12" cy="12" r="4.600" fill="#4285f4" /></svg>
          </Task>
        </TaskList>
        <Tray>
          <TrayButton $width={44} aria-label="People"><svg width="16" height="16" viewBox="0 0 16 16" fill="none" stroke="#fff" strokeWidth="1.200"><circle cx="11" cy="3.500" r="2.500" /><circle cx="5" cy="8" r="2.500" /><path d="M8 9Q11 4 15 9.500M1 15.500Q5 7 9 15.500" /></svg></TrayButton>
          <TrayButton $width={26} aria-label="Hidden icons"><svg width="12" height="8"><path d="M1 6.500L6 1.500L11 6.500" fill="none" stroke="#fff" strokeWidth="1.300" /></svg></TrayButton>
          <TrayButton aria-label="Network"><svg width="13" height="13" viewBox="0 0 13 13" fill="none" stroke="#fff" strokeWidth="1.200"><path d="M1 12Q2 2 12 1M4 12Q5 5 12 4M7 12Q8 8 12 7" /><circle cx="11" cy="11" r="1" /></svg></TrayButton>
          <TrayButton aria-label="OneDrive"><svg width="16" height="12" viewBox="0 0 16 12"><path d="M3 11Q0 11 0 8Q0 5 3 5Q4 1 8 1Q11 1 12 4Q16 5 16 8Q16 11 13 11Z" fill="#9c9e9f" /><path d="M3 11Q4 6 8 7Q12 4 15 6Q17 11 13 11Z" fill="#fff" /></svg></TrayButton>
          <TrayButton aria-label="Volume"><svg width="17" height="14" viewBox="0 0 17 14" fill="none" stroke="#fff" strokeWidth="1.200"><path d="M1 5H3.500L7 1.500V12.500L3.500 9H1ZM9 5Q10.500 7 9 9M11.500 3Q14 7 11.500 11M14 1Q18 7 14 13" /></svg></TrayButton>
          <TrayButton $width={38}>ENG</TrayButton>
          <Clock>17:55<br />17-10-2023</Clock>
          <TrayButton $width={44} aria-label="Notifications"><svg width="17" height="16" viewBox="0 0 17 16"><path d="M1 1H16V12.500H11L8.500 15L6 12.500H1Z" fill="none" stroke="#fff" strokeWidth="1.200" /></svg></TrayButton>
          <ShowDesktop aria-label="Show desktop" />
        </Tray>
      </Taskbar>
    </Shell>
  );
}
